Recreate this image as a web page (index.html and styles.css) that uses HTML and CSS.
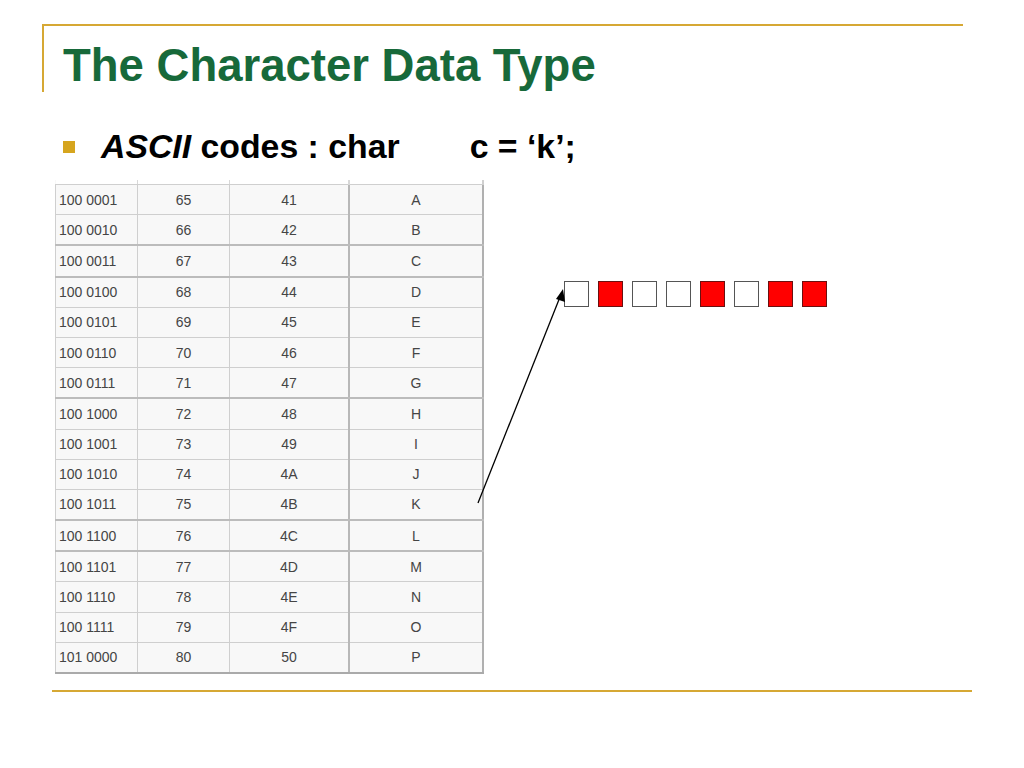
FILE: index.html
```html
<!DOCTYPE html>
<html>
<head>
<meta charset="utf-8">
<link rel="stylesheet" href="styles.css">
</head>
<body>
<div class="slide">
  <div class="header">
    <h1 class="title">The Character Data Type</h1>
  </div>
  <div class="bullet-row">
    <span class="bullet"></span>
    <span class="btext"><i>ASCII</i> codes : char</span>
    <span class="code">c = ‘k’;</span>
  </div>
  <div class="content">
    <table class="ascii">
      <tr class="stub"><td></td><td></td><td></td><td></td></tr>
      <tr><td>100 0001</td><td>65</td><td>41</td><td>A</td></tr>
      <tr class="dark"><td>100 0010</td><td>66</td><td>42</td><td>B</td></tr>
      <tr class="dark"><td>100 0011</td><td>67</td><td>43</td><td>C</td></tr>
      <tr><td>100 0100</td><td>68</td><td>44</td><td>D</td></tr>
      <tr><td>100 0101</td><td>69</td><td>45</td><td>E</td></tr>
      <tr><td>100 0110</td><td>70</td><td>46</td><td>F</td></tr>
      <tr class="dark"><td>100 0111</td><td>71</td><td>47</td><td>G</td></tr>
      <tr><td>100 1000</td><td>72</td><td>48</td><td>H</td></tr>
      <tr><td>100 1001</td><td>73</td><td>49</td><td>I</td></tr>
      <tr><td>100 1010</td><td>74</td><td>4A</td><td>J</td></tr>
      <tr class="dark"><td>100 1011</td><td>75</td><td>4B</td><td>K</td></tr>
      <tr class="dark"><td>100 1100</td><td>76</td><td>4C</td><td>L</td></tr>
      <tr><td>100 1101</td><td>77</td><td>4D</td><td>M</td></tr>
      <tr><td>100 1110</td><td>78</td><td>4E</td><td>N</td></tr>
      <tr><td>100 1111</td><td>79</td><td>4F</td><td>O</td></tr>
      <tr class="last"><td>101 0000</td><td>80</td><td>50</td><td>P</td></tr>
    </table>
    <div class="bits">
      <span class="bit"></span>
      <span class="bit on"></span>
      <span class="bit"></span>
      <span class="bit"></span>
      <span class="bit on"></span>
      <span class="bit"></span>
      <span class="bit on"></span>
      <span class="bit on"></span>
    </div>
  </div>
  <div class="footer-line"></div>
  <svg class="arrow" width="1024" height="768" viewBox="0 0 1024 768">
    <line x1="478" y1="503" x2="560" y2="297" stroke="#000" stroke-width="1.3"/>
    <polygon points="563,289 556,299 565,302" fill="#000"/>
  </svg>
</div>
</body>
</html>
```

FILE: styles.css
```css
html, body {
  margin: 0;
  padding: 0;
  background: #fff;
}
.slide {
  position: relative;
  width: 1024px;
  height: 768px;
  overflow: hidden;
  font-family: "Liberation Sans", Arial, sans-serif;
}
.header {
  margin-left: 42px;
  margin-top: 24px;
  width: 921px;
  height: 68px;
  border-top: 2px solid #d6a834;
  border-left: 2px solid #d6a834;
  box-sizing: border-box;
  padding-left: 19px;
  padding-top: 17px;
}
.title {
  margin: 0;
  font-size: 45.5px;
  line-height: 1;
  font-weight: bold;
  color: #17693a;
}
.bullet-row {
  display: flex;
  align-items: flex-start;
  margin-left: 63px;
  margin-top: 38px;
  height: 50px;
  font-size: 33.8px;
  line-height: 1;
  font-weight: bold;
  color: #000;
}
.bullet {
  width: 12px;
  height: 12px;
  background: #d6a51e;
  margin-top: 11px;
  margin-right: 26px;
  flex: none;
}
.code {
  margin-left: 70px;
}
.content {
  display: flex;
  align-items: flex-start;
}
.ascii {
  margin-left: 55px;
  border-collapse: collapse;
  font-size: 14px;
  color: #454545;
  background: #f8f8f8;
}
.ascii td {
  height: 29.2px;
  padding: 0;
  border: 1px solid #cfcfcf;
  text-align: center;
  vertical-align: middle;
}
.ascii td:nth-child(1) { width: 82px; text-align: left; padding-left: 3px; box-sizing: border-box; }
.ascii td:nth-child(2) { width: 91px; }
.ascii td:nth-child(3) { width: 118px; border-right: 2px solid #b8b8b8; }
.ascii td:nth-child(4) { width: 132px; border-right: 2px solid #b0b0b0; }
.ascii tr.stub td {
  height: 4px;
  border-top: none;
  background: #fff;
  border-left-color: #d8d8d8;
  border-right-color: #d8d8d8;
}
.ascii tr.stub td:nth-child(1) { border-left: none; }
.ascii tr.stub td:nth-child(4) { border-right: 2px solid #d0d0d0; }
.ascii tr.dark td { border-bottom: 2px solid #bcbcbc; }
.ascii tr.last td { border-bottom: 2px solid #aaaaaa; }
.bits {
  display: flex;
  gap: 9px;
  margin-left: 80px;
  padding-top: 101px;
}
.bit {
  width: 23px;
  height: 24px;
  border: 1px solid #555;
  background: #fff;
}
.bit.on {
  background: #ff0000;
  border-color: #6a1010;
}
.footer-line {
  margin-left: 52px;
  margin-top: 16px;
  width: 920px;
  height: 2px;
  background: #d6a834;
}
.arrow {
  position: absolute;
  left: 0;
  top: 0;
  pointer-events: none;
}
```
